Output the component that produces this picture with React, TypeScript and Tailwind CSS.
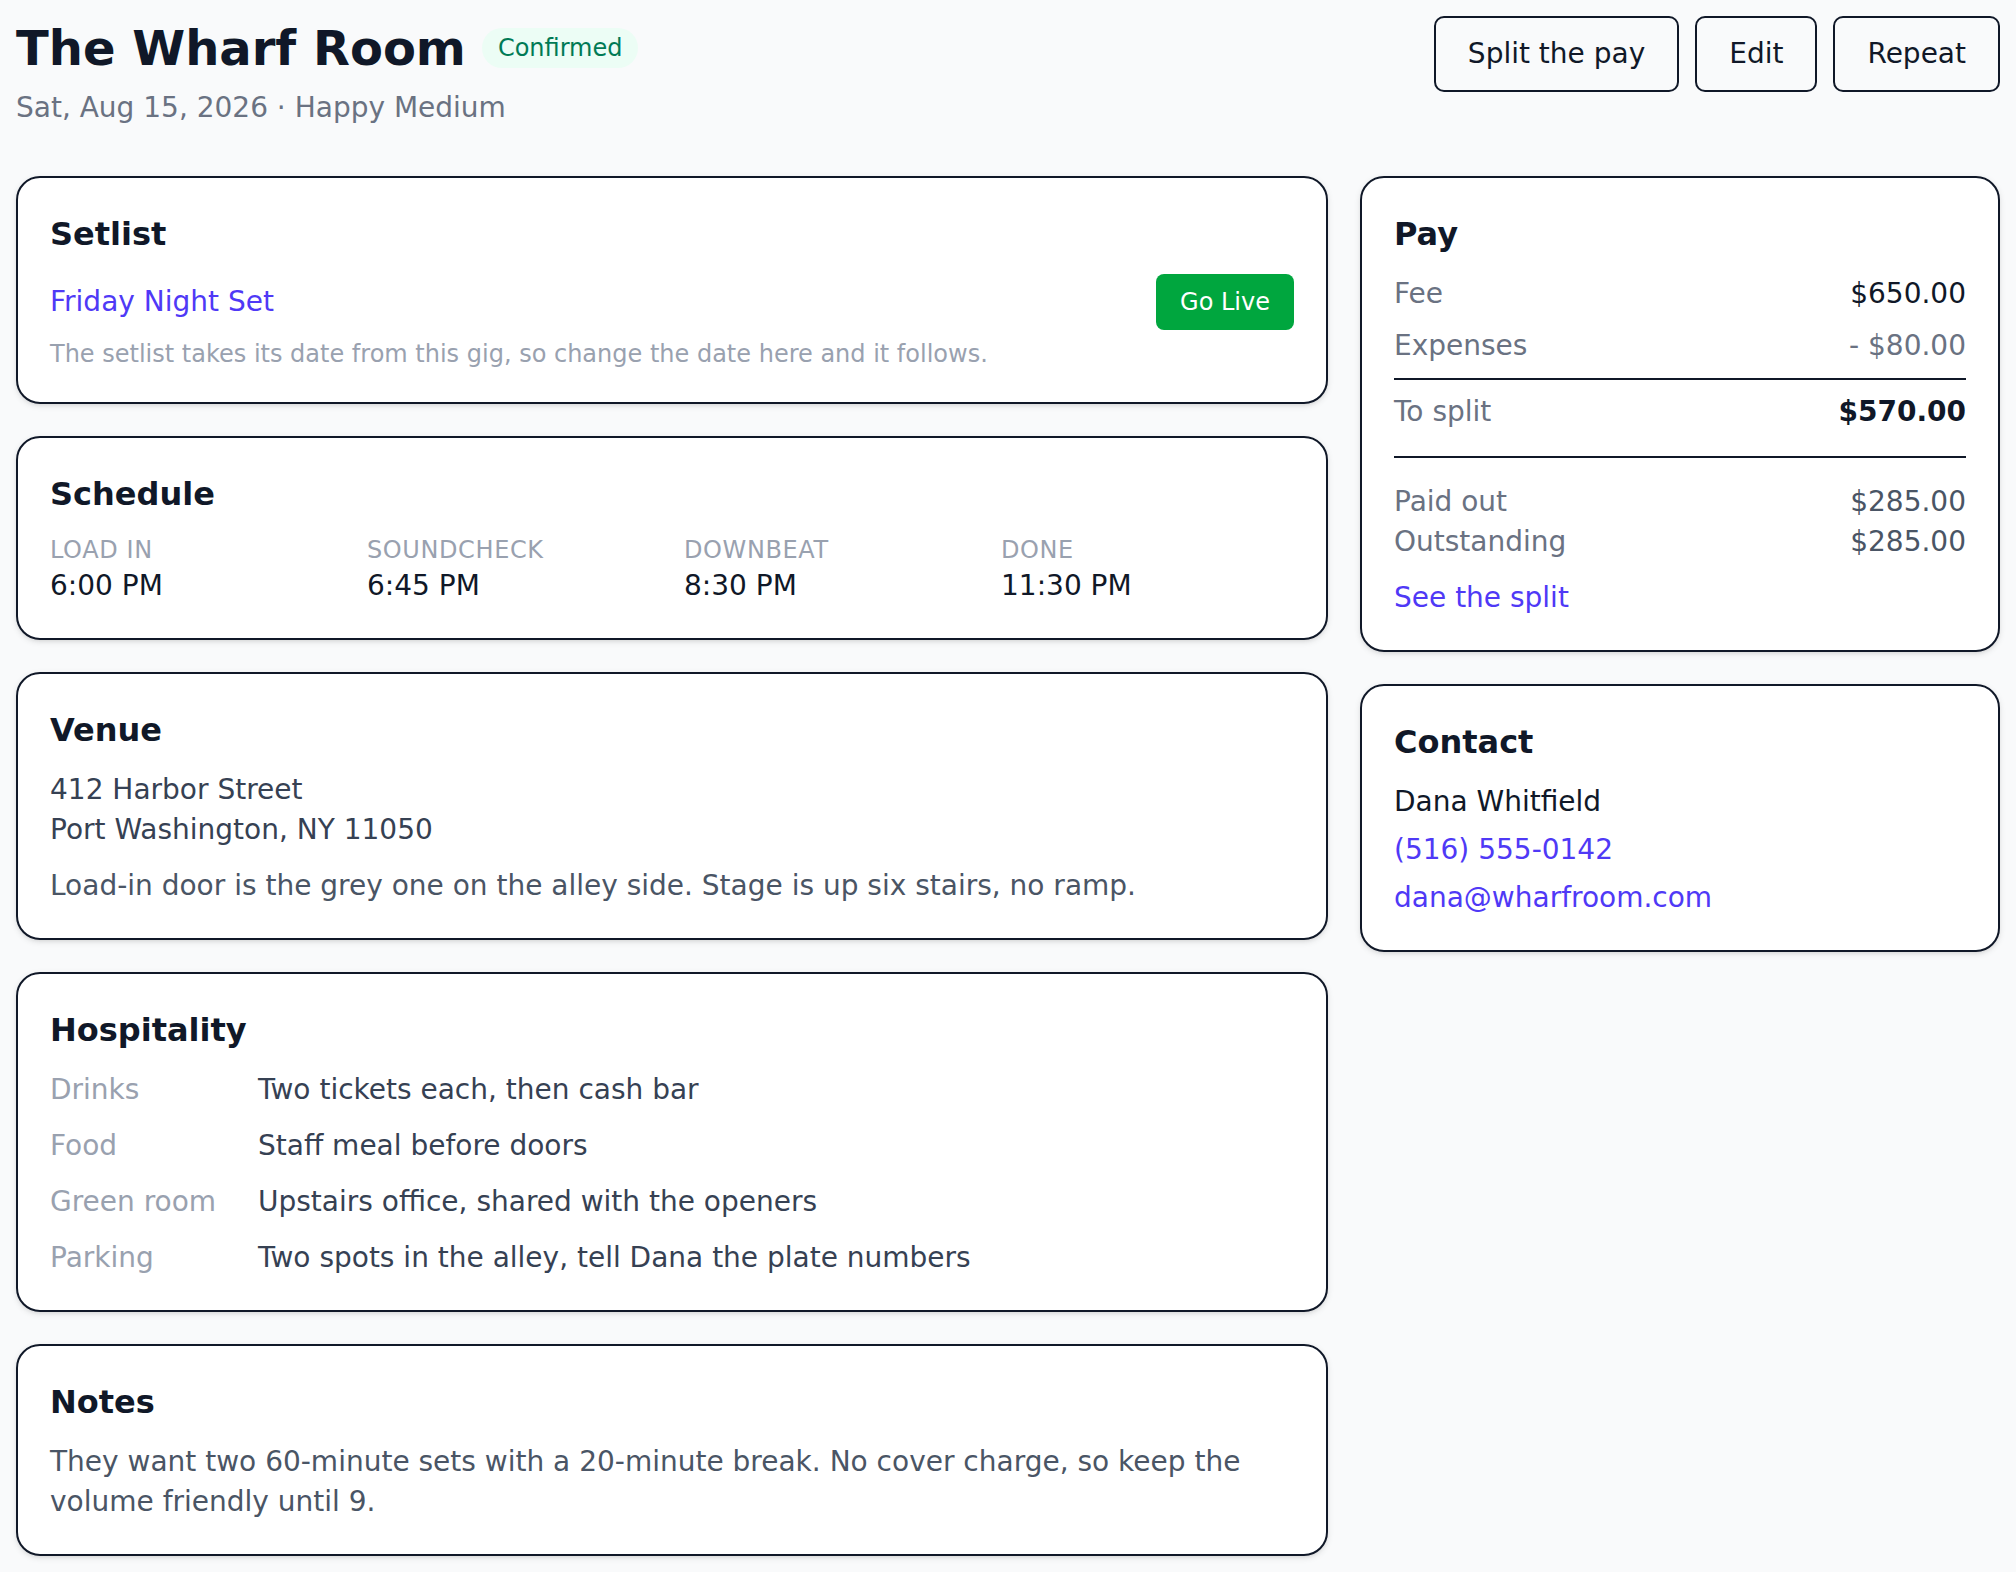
import type { ReactNode } from 'react';

const font = "font-['DejaVu_Sans','Liberation_Sans',sans-serif]";

function Card({ children }: { children: ReactNode }) {
  return (
    <section className="rounded-[24px] border-2 border-gray-900 bg-white p-[32px] shadow-[0_2px_6px_rgba(0,0,0,0.1),0_2px_4px_-2px_rgba(0,0,0,0.1)]">
      {children}
    </section>
  );
}

function Heading({ children }: { children: ReactNode }) {
  return <h2 className="mb-[16px] text-[32px] leading-[48px] font-bold text-gray-900">{children}</h2>;
}

const schedule = [
  { label: 'Load in', time: '6:00 PM' },
  { label: 'Soundcheck', time: '6:45 PM' },
  { label: 'Downbeat', time: '8:30 PM' },
  { label: 'Done', time: '11:30 PM' },
];

const hospitality = [
  { label: 'Drinks', value: 'Two tickets each, then cash bar' },
  { label: 'Food', value: 'Staff meal before doors' },
  { label: 'Green room', value: 'Upstairs office, shared with the openers' },
  { label: 'Parking', value: 'Two spots in the alley, tell Dana the plate numbers' },
];

export default function App() {
  return (
    <div className={`min-h-screen bg-gray-50 p-[16px] ${font}`}>
      {/* Header */}
      <header className="flex items-start justify-between">
        <div>
          <div className="flex items-center gap-[16px]">
            <h1 className="text-[48px] leading-[64px] font-bold text-gray-900">The Wharf Room</h1>
            <span className="rounded-full bg-emerald-50 px-[16px] py-[4px] text-[24px] leading-[32px] text-emerald-700">
              Confirmed
            </span>
          </div>
          <p className="mt-[8px] text-[28px] leading-[40px] text-gray-500">Sat, Aug 15, 2026 · Happy Medium</p>
        </div>
        <div className="flex gap-[16px]">
          {['Split the pay', 'Edit', 'Repeat'].map(label => (
            <button
              key={label}
              className="rounded-[10px] border-2 border-gray-900 px-[32px] py-[16px] text-[28px] leading-[40px] text-gray-900"
            >
              {label}
            </button>
          ))}
        </div>
      </header>

      <div className="mt-[48px] flex items-start gap-[32px]">
        {/* Left column */}
        <div className="flex flex-1 flex-col gap-[32px]">
          <Card>
            <Heading>Setlist</Heading>
            <div className="flex items-center justify-between">
              <a className="text-[28px] leading-[40px] text-indigo-600">Friday Night Set</a>
              <button className="rounded-[8px] bg-green-600 px-[24px] py-[12px] text-[24px] leading-[32px] text-white">
                Go Live
              </button>
            </div>
            <p className="mt-[8px] text-[24px] leading-[32px] text-gray-400">
              The setlist takes its date from this gig, so change the date here and it follows.
            </p>
          </Card>

          <Card>
            <Heading>Schedule</Heading>
            <div className="grid grid-cols-4 gap-[24px]">
              {schedule.map(s => (
                <div key={s.label}>
                  <div className="text-[24px] leading-[32px] uppercase tracking-wide text-gray-400">{s.label}</div>
                  <div className="text-[28px] leading-[40px] text-gray-900">{s.time}</div>
                </div>
              ))}
            </div>
          </Card>

          <Card>
            <Heading>Venue</Heading>
            <p className="text-[28px] leading-[40px] text-gray-700">
              412 Harbor Street
              <br />
              Port Washington, NY 11050
            </p>
            <p className="mt-[16px] text-[28px] leading-[40px] text-gray-600">
              Load-in door is the grey one on the alley side. Stage is up six stairs, no ramp.
            </p>
          </Card>

          <Card>
            <Heading>Hospitality</Heading>
            <div className="flex flex-col gap-[16px]">
              {hospitality.map(h => (
                <div key={h.label} className="flex gap-[16px] text-[28px] leading-[40px]">
                  <span className="w-[192px] shrink-0 text-gray-400">{h.label}</span>
                  <span className="text-gray-700">{h.value}</span>
                </div>
              ))}
            </div>
          </Card>

          <Card>
            <Heading>Notes</Heading>
            <p className="text-[28px] leading-[40px] text-gray-600">
              They want two 60-minute sets with a 20-minute break. No cover charge, so keep the volume friendly until 9.
            </p>
          </Card>
        </div>

        {/* Right column */}
        <div className="flex w-[640px] flex-col gap-[32px]">
          <Card>
            <Heading>Pay</Heading>
            <div className="flex flex-col gap-[12px] text-[28px] leading-[40px]">
              <div className="flex justify-between">
                <span className="text-gray-500">Fee</span>
                <span className="text-gray-900">$650.00</span>
              </div>
              <div className="flex justify-between">
                <span className="text-gray-500">Expenses</span>
                <span className="text-gray-500">- $80.00</span>
              </div>
            </div>
            <div className="mt-[12px] flex justify-between border-t-2 border-gray-900 pt-[12px] pb-[24px] text-[28px] leading-[40px]">
              <span className="text-gray-500">To split</span>
              <span className="font-bold text-gray-900">$570.00</span>
            </div>
            <div className="border-t-2 border-gray-900 pt-[24px] text-[28px] leading-[40px]">
              <div className="flex justify-between">
                <span className="text-gray-500">Paid out</span>
                <span className="text-gray-600">$285.00</span>
              </div>
              <div className="flex justify-between">
                <span className="text-gray-500">Outstanding</span>
                <span className="text-gray-600">$285.00</span>
              </div>
            </div>
            <a className="mt-[16px] block text-[28px] leading-[40px] text-indigo-600">See the split</a>
          </Card>

          <Card>
            <Heading>Contact</Heading>
            <div className="flex flex-col gap-[8px] text-[28px] leading-[40px]">
              <span className="text-gray-900">Dana Whitfield</span>
              <a className="text-indigo-600">(516) 555-0142</a>
              <a className="text-indigo-600">dana@wharfroom.com</a>
            </div>
          </Card>
        </div>
      </div>
    </div>
  );
}
